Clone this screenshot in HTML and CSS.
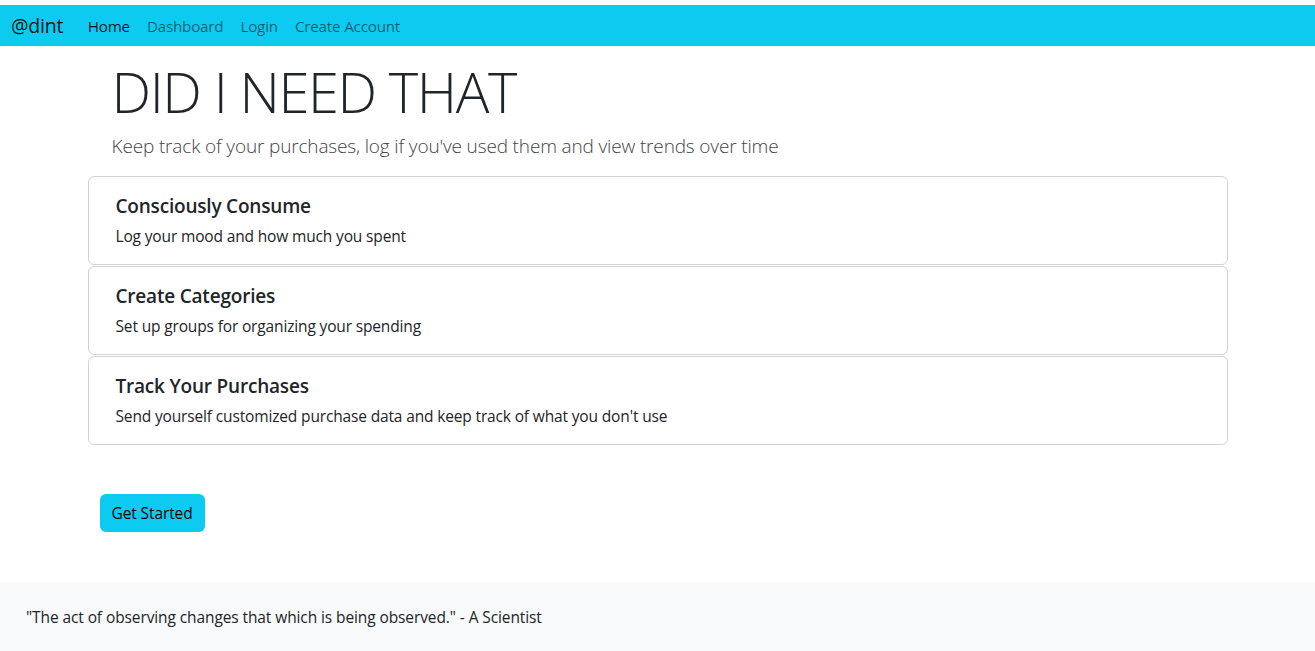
FILE: index.html
```html
<!DOCTYPE html>
<html lang="en">
<head>
<meta charset="utf-8">
<title>Did I Need That</title>
<link rel="stylesheet" href="styles.css">
</head>
<body>
<div class="page">
  <nav class="navbar">
    <a class="brand" href="#">@dint</a>
    <ul class="nav">
      <li><a class="nav-link active" href="#">Home</a></li>
      <li><a class="nav-link" href="#">Dashboard</a></li>
      <li><a class="nav-link" href="#">Login</a></li>
      <li><a class="nav-link" href="#">Create Account</a></li>
    </ul>
  </nav>
  <main class="container">
    <header class="hero">
      <h1 class="display">DID I NEED THAT</h1>
      <p class="lead">Keep track of your purchases, log if you've used them and view trends over time</p>
    </header>
    <section class="cards">
      <div class="card">
        <h5 class="card-title">Consciously Consume</h5>
        <p class="card-text">Log your mood and how much you spent</p>
      </div>
      <div class="card">
        <h5 class="card-title">Create Categories</h5>
        <p class="card-text">Set up groups for organizing your spending</p>
      </div>
      <div class="card">
        <h5 class="card-title">Track Your Purchases</h5>
        <p class="card-text">Send yourself customized purchase data and keep track of what you don't use</p>
      </div>
    </section>
    <div class="actions">
      <a class="btn" href="#">Get Started</a>
    </div>
  </main>
  <footer class="footer">
    <p>"The act of observing changes that which is being observed." - A Scientist</p>
  </footer>
</div>
</body>
</html>
```

FILE: styles.css
```css
* { box-sizing: border-box; }
html, body { margin: 0; padding: 0; }
body {
  font-family: "Open Sans", "Noto Sans", sans-serif;
  font-size: 16px;
  line-height: 1.5;
  color: #212529;
  background: #fff;
}
a { text-decoration: none; }
.page { padding-top: 5px; }

.navbar {
  display: flex;
  align-items: center;
  height: 41px;
  background: #0dcaf0;
  padding: 1px 11px 0;
}
.brand {
  font-size: 19.5px;
  color: rgba(0,0,0,.9);
  margin-right: 16px;
  letter-spacing: -0.2px;
}
.nav {
  display: flex;
  list-style: none;
  margin: 0;
  padding: 0;
}
.nav-link {
  display: block;
  padding: 0 8.5px;
  font-size: 15.2px;
  color: rgba(0,0,0,.55);
  letter-spacing: -0.2px;
}
.nav-link.active { color: rgba(0,0,0,.9); }

.container {
  width: 1140px;
  margin: 0 auto;
}
.hero {
  padding: 12px 24px 0;
}
.display {
  margin: 0;
  font-size: 56px;
  font-weight: 300;
  line-height: 1.2;
  letter-spacing: -1.4px;
}
.lead {
  margin: 7px 0 15px;
  font-size: 19px;
  font-weight: 300;
  color: #444;
  letter-spacing: -0.15px;
}
.cards {
  display: flex;
  flex-direction: column;
  gap: 1px;
}
.card {
  border: 1px solid rgba(0,0,0,.175);
  border-radius: 6px;
  height: 89px;
  padding: 18px 27px 0;
}
.card-title {
  margin: 0 0 8px;
  font-size: 19px;
  font-weight: 600;
  line-height: 1.2;
  letter-spacing: -0.2px;
}
.card-text {
  margin: 0;
  font-size: 15.5px;
  letter-spacing: -0.15px;
}
.actions {
  padding: 49px 12px 50px;
}
.btn {
  display: inline-block;
  background: #0dcaf0;
  color: #000;
  border-radius: 6px;
  padding: 6px 12px;
  font-size: 15.5px;
  letter-spacing: -0.1px;
  height: 38px;
  line-height: 26px;
}
.footer {
  background: #f8f9fa;
  padding: 24px 26px;
}
.footer p {
  margin: 0;
  font-size: 15.5px;
  letter-spacing: -0.1px;
}
```
